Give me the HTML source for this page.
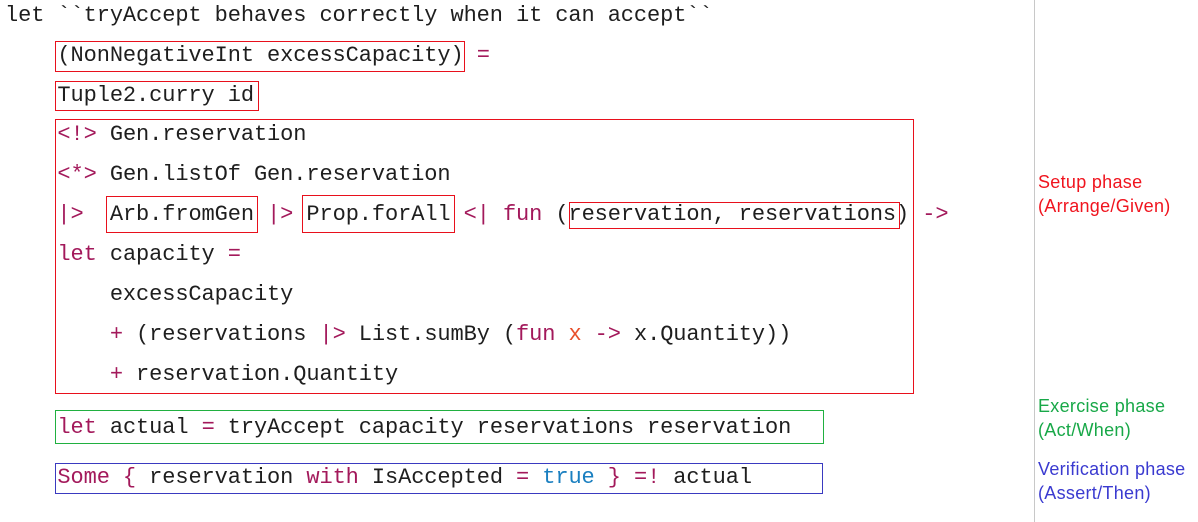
<!DOCTYPE html>
<html><head><style>
body{margin:0;width:1198px;height:522px;background:#fff;position:relative;overflow:hidden}
.l{position:absolute;left:5px;font:22px/28px "Liberation Mono",monospace;color:#1e1e1e;white-space:pre;letter-spacing:-0.1px}
.k{color:#a3195b}.b{color:#1a7fc0}.o{color:#e8502c}
.bx{position:absolute;border:1px solid #e8101c;box-sizing:border-box}
.lab{position:absolute;left:1038px;font:18px/24px "Liberation Sans",sans-serif;letter-spacing:0.3px}
</style></head><body>
<div class="l" style="top:2px">let ``tryAccept behaves correctly when it can accept``</div>
<div class="l" style="top:42px">    (NonNegativeInt excessCapacity) <span class="k">=</span></div>
<div class="l" style="top:82px">    Tuple2.curry id</div>
<div class="l" style="top:121px">    <span class="k">&lt;!&gt;</span> Gen.reservation</div>
<div class="l" style="top:161px">    <span class="k">&lt;*&gt;</span> Gen.listOf Gen.reservation</div>
<div class="l" style="top:201px">    <span class="k">|&gt;</span>  Arb.fromGen <span class="k">|&gt;</span> Prop.forAll <span class="k">&lt;|</span> <span class="k">fun</span> (reservation, reservations) <span class="k">-&gt;</span></div>
<div class="l" style="top:241px">    <span class="k">let</span> capacity <span class="k">=</span></div>
<div class="l" style="top:281px">        excessCapacity</div>
<div class="l" style="top:321px">        <span class="k">+</span> (reservations <span class="k">|&gt;</span> List.sumBy (<span class="k">fun</span> <span class="o">x</span> <span class="k">-&gt;</span> x.Quantity))</div>
<div class="l" style="top:361px">        <span class="k">+</span> reservation.Quantity</div>
<div class="l" style="top:414px">    <span class="k">let</span> actual <span class="k">=</span> tryAccept capacity reservations reservation</div>
<div class="l" style="top:464px">    <span class="k">Some { </span>reservation <span class="k">with</span> IsAccepted <span class="k">=</span> <span class="b">true</span> <span class="k">} =!</span> actual</div>

<div class="bx" style="left:55px;top:41px;width:410px;height:31px"></div>
<div class="bx" style="left:55px;top:81px;width:204px;height:30px"></div>
<div class="bx" style="left:55px;top:119px;width:859px;height:275px"></div>
<div class="bx" style="left:106px;top:196px;width:152px;height:37px"></div>
<div class="bx" style="left:302px;top:195px;width:153px;height:38px"></div>
<div class="bx" style="left:569px;top:202px;width:331px;height:27px"></div>
<div class="bx" style="left:55px;top:410px;width:769px;height:34px;border-color:#20b040"></div>
<div class="bx" style="left:55px;top:463px;width:768px;height:31px;border-color:#3a3ac0"></div>

<div style="position:absolute;left:1034px;top:0;width:1px;height:522px;background:#c8c8c8"></div>
<div class="lab" style="top:170px;color:#f0141e">Setup phase<br>(Arrange/Given)</div>
<div class="lab" style="top:394px;color:#18a848">Exercise phase<br>(Act/When)</div>
<div class="lab" style="top:457px;color:#3a3ad0">Verification phase<br>(Assert/Then)</div>
</body></html>
